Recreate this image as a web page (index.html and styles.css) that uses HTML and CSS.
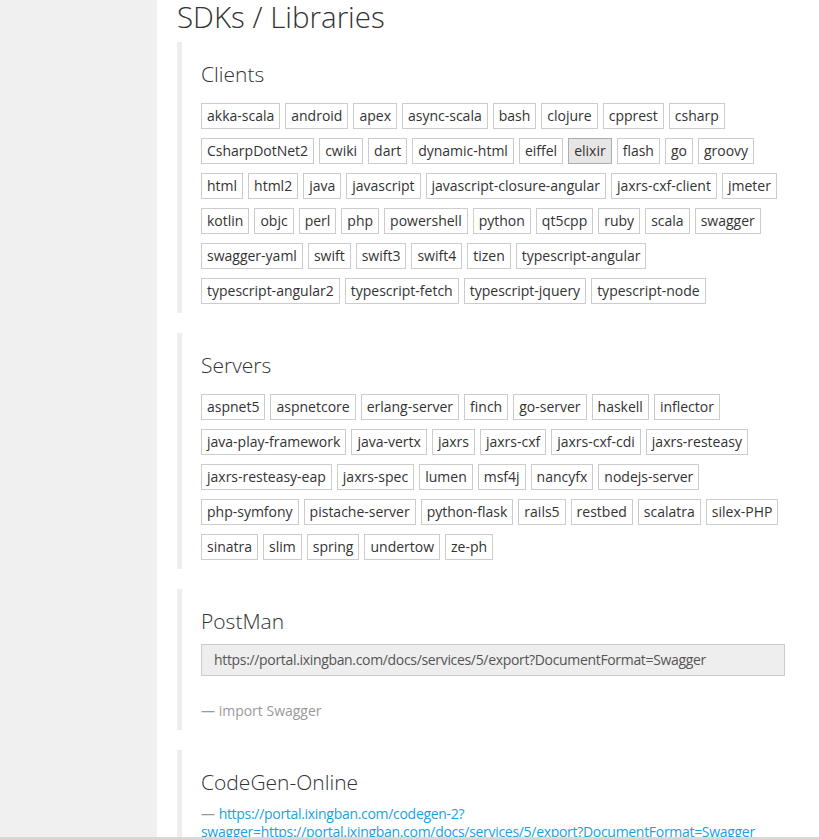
FILE: index.html
```html
<!DOCTYPE html>
<html lang="en">
<head>
<meta charset="utf-8">
<title>SDKs / Libraries</title>
<link rel="stylesheet" href="styles.css">
</head>
<body>
<div class="layout">
  <aside class="sidebar"></aside>
  <main class="main">
    <h1 class="page-title">SDKs / Libraries</h1>

    <section class="block">
      <h3 class="block-title">Clients</h3>
      <div class="tags">
        <span class="tag">akka-scala</span>
        <span class="tag">android</span>
        <span class="tag">apex</span>
        <span class="tag">async-scala</span>
        <span class="tag">bash</span>
        <span class="tag">clojure</span>
        <span class="tag">cpprest</span>
        <span class="tag">csharp</span>
        <span class="tag">CsharpDotNet2</span>
        <span class="tag">cwiki</span>
        <span class="tag">dart</span>
        <span class="tag">dynamic-html</span>
        <span class="tag">eiffel</span>
        <span class="tag tag-active">elixir</span>
        <span class="tag">flash</span>
        <span class="tag">go</span>
        <span class="tag">groovy</span>
        <span class="tag">html</span>
        <span class="tag">html2</span>
        <span class="tag">java</span>
        <span class="tag">javascript</span>
        <span class="tag">javascript-closure-angular</span>
        <span class="tag">jaxrs-cxf-client</span>
        <span class="tag">jmeter</span>
        <span class="tag">kotlin</span>
        <span class="tag">objc</span>
        <span class="tag">perl</span>
        <span class="tag">php</span>
        <span class="tag">powershell</span>
        <span class="tag">python</span>
        <span class="tag">qt5cpp</span>
        <span class="tag">ruby</span>
        <span class="tag">scala</span>
        <span class="tag">swagger</span>
        <span class="tag">swagger-yaml</span>
        <span class="tag">swift</span>
        <span class="tag">swift3</span>
        <span class="tag">swift4</span>
        <span class="tag">tizen</span>
        <span class="tag">typescript-angular</span>
        <span class="tag">typescript-angular2</span>
        <span class="tag">typescript-fetch</span>
        <span class="tag">typescript-jquery</span>
        <span class="tag">typescript-node</span>
      </div>
    </section>

    <section class="block">
      <h3 class="block-title">Servers</h3>
      <div class="tags">
        <span class="tag">aspnet5</span>
        <span class="tag">aspnetcore</span>
        <span class="tag">erlang-server</span>
        <span class="tag">finch</span>
        <span class="tag">go-server</span>
        <span class="tag">haskell</span>
        <span class="tag">inflector</span>
        <span class="tag">java-play-framework</span>
        <span class="tag">java-vertx</span>
        <span class="tag">jaxrs</span>
        <span class="tag">jaxrs-cxf</span>
        <span class="tag">jaxrs-cxf-cdi</span>
        <span class="tag">jaxrs-resteasy</span>
        <span class="tag">jaxrs-resteasy-eap</span>
        <span class="tag">jaxrs-spec</span>
        <span class="tag">lumen</span>
        <span class="tag">msf4j</span>
        <span class="tag">nancyfx</span>
        <span class="tag">nodejs-server</span>
        <span class="tag">php-symfony</span>
        <span class="tag">pistache-server</span>
        <span class="tag">python-flask</span>
        <span class="tag">rails5</span>
        <span class="tag">restbed</span>
        <span class="tag">scalatra</span>
        <span class="tag">silex-PHP</span>
        <span class="tag">sinatra</span>
        <span class="tag">slim</span>
        <span class="tag">spring</span>
        <span class="tag">undertow</span>
        <span class="tag">ze-ph</span>
      </div>
    </section>

    <section class="block">
      <h3 class="block-title">PostMan</h3>
      <div class="url-box">https://portal.ixingban.com/docs/services/5/export?DocumentFormat=Swagger</div>
      <p class="note">— import Swagger</p>
    </section>

    <section class="block">
      <h3 class="block-title">CodeGen-Online</h3>
      <p class="link-line"><span class="dash">—</span> <a class="link" href="#">https://portal.ixingban.com/codegen-2?<wbr>swagger=https://portal.ixingban.com/docs/services/5/export?DocumentFormat=Swagger</a></p>
    </section>
  </main>
</div>
<div class="bottom-rule"></div>
</body>
</html>
```

FILE: styles.css
```css
html, body {
  margin: 0;
  padding: 0;
  overflow: hidden;
  background: #ffffff;
}

body {
  font-family: "Open Sans", "Noto Sans", Arial, sans-serif;
  font-size: 14px;
  color: #333333;
}

.layout {
  display: flex;
  min-height: 100vh;
}

.sidebar {
  width: 157px;
  flex: 0 0 157px;
  background: #f0f0f0;
}

.main {
  flex: 1;
  padding: 0 14px 0 20px;
  min-width: 0;
}

.page-title {
  margin: 0 0 9px 0;
  font-size: 29.5px;
  line-height: 33px;
  font-weight: 300;
  color: #333333;
}

.block {
  border-left: 5px solid #eeeeee;
  padding: 19px 20px 9px 19px;
  margin: 0 0 20px 0;
}

.block-title {
  margin: 0 0 16px 0;
  font-size: 21px;
  line-height: 26px;
  font-weight: 300;
  color: #333333;
}

.tags {
  display: flex;
  flex-wrap: wrap;
  column-gap: 5px;
  row-gap: 9px;
}

.tag {
  display: block;
  border: 1px solid #cccccc;
  padding: 2px 5px;
  line-height: 20px;
  font-size: 14px;
  color: #333333;
  background: #ffffff;
  white-space: nowrap;
}

.tag-active {
  background: #e6e6e6;
  border-color: #adadad;
}

.block .url-box {
  margin-top: -6px;
  border: 1px solid #cccccc;
  background: #eeeeee;
  padding: 5px 12px;
  line-height: 20px;
  color: #555555;
  letter-spacing: -0.33px;
}

.note {
  margin: 25px 0 0 0;
  line-height: 20px;
  color: #999999;
}

.link-line {
  margin: -6px 0 0 0;
  line-height: 18px;
  color: #999999;
}

.link {
  color: #1ba1e2;
  text-decoration: none;
  letter-spacing: -0.3px;
}

.bottom-rule {
  position: fixed;
  left: 0;
  right: 0;
  bottom: 0;
  height: 2px;
  background: #d9d9d9;
}
```
